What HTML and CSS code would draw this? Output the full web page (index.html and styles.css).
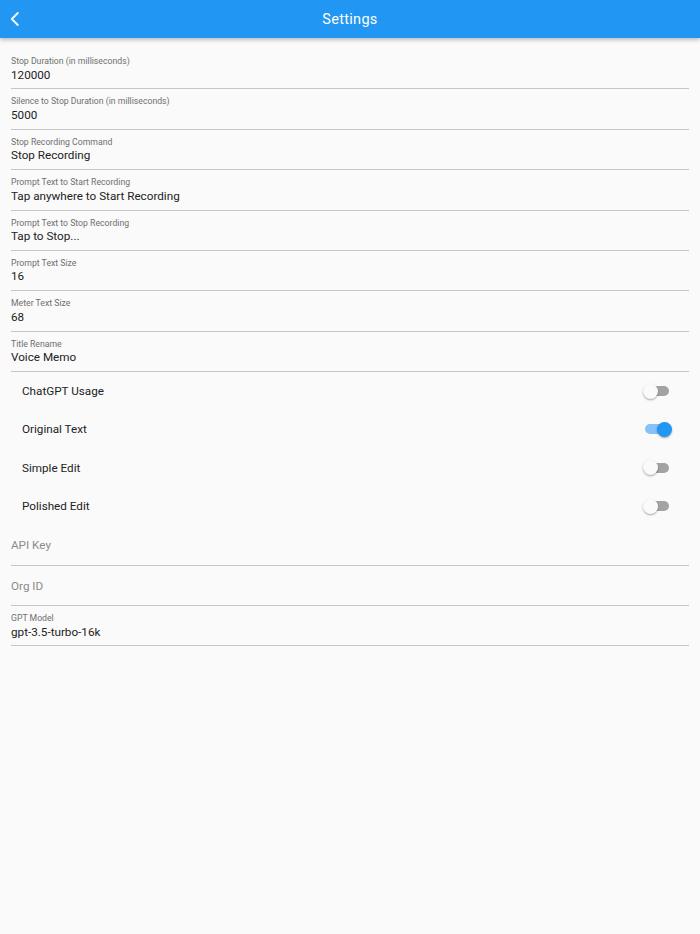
FILE: index.html
```html
<!DOCTYPE html>
<html>
<head>
<meta charset="utf-8">
<link rel="stylesheet" href="styles.css">
</head>
<body>
<header class="appbar">
  <button class="back" aria-label="Back">
    <svg width="14" height="16" viewBox="0 0 14 16"><path d="M9.8 2 L3.8 8 L9.8 14" fill="none" stroke="#fff" stroke-width="1.8" stroke-linecap="round" stroke-linejoin="round"/></svg>
  </button>
  <h1 class="title">Settings</h1>
</header>
<main class="content">
  <div class="field"><div class="label">Stop Duration (in milliseconds)</div><div class="value">120000</div></div>
  <div class="field"><div class="label">Silence to Stop Duration (in milliseconds)</div><div class="value">5000</div></div>
  <div class="field"><div class="label">Stop Recording Command</div><div class="value">Stop Recording</div></div>
  <div class="field"><div class="label">Prompt Text to Start Recording</div><div class="value">Tap anywhere to Start Recording</div></div>
  <div class="field"><div class="label">Prompt Text to Stop Recording</div><div class="value">Tap to Stop...</div></div>
  <div class="field"><div class="label">Prompt Text Size</div><div class="value">16</div></div>
  <div class="field"><div class="label">Meter Text Size</div><div class="value">68</div></div>
  <div class="field"><div class="label">Title Rename</div><div class="value">Voice Memo</div></div>

  <div class="toggle-row"><span class="toggle-label">ChatGPT Usage</span><span class="switch"><span class="track"></span><span class="thumb"></span></span></div>
  <div class="toggle-row"><span class="toggle-label">Original Text</span><span class="switch on"><span class="track"></span><span class="thumb"></span></span></div>
  <div class="toggle-row"><span class="toggle-label">Simple Edit</span><span class="switch"><span class="track"></span><span class="thumb"></span></span></div>
  <div class="toggle-row"><span class="toggle-label">Polished Edit</span><span class="switch"><span class="track"></span><span class="thumb"></span></span></div>

  <div class="field"><div class="placeholder">API Key</div></div>
  <div class="field"><div class="placeholder">Org ID</div></div>
  <div class="field"><div class="label">GPT Model</div><div class="value">gpt-3.5-turbo-16k</div></div>
</main>
</body>
</html>
```
FILE: styles.css
```css
html, body {
  margin: 0;
  padding: 0;
  background: #fafafa;
  font-family: Roboto, "Liberation Sans", sans-serif;
  color: #212121;
}
.appbar {
  position: relative;
  height: 38px;
  background: #2196f3;
  box-shadow: 0 2px 4px rgba(0, 0, 0, 0.25);
  display: flex;
  align-items: center;
  justify-content: center;
  z-index: 1;
}
.back {
  position: absolute;
  left: 8px;
  top: 11px;
  background: none;
  border: 0;
  padding: 0;
  width: 14px;
  height: 16px;
  display: block;
}
.back svg { display: block; }
.title {
  margin: 0;
  font-family: Roboto, "Liberation Sans", sans-serif;
  font-weight: 400;
  font-size: 14.5px;
  color: #fff;
  letter-spacing: 0.3px;
}
.content {
  padding: 11.1px 11px 0 11px;
}
.field {
  height: 40.36px;
  box-sizing: border-box;
  border-bottom: 1px solid #c6c6c6;
  padding-top: 6px;
}
.label {
  font-size: 8.7px;
  line-height: 12px;
  color: #6f6f6f;
}
.value {
  font-size: 11.7px;
  line-height: 16px;
  margin-top: -0.5px;
  color: #222;
}
.placeholder {
  font-size: 11.7px;
  line-height: 16px;
  padding-top: 6px;
  color: #8a8a8a;
}
.toggle-row {
  height: 38.33px;
  display: flex;
  align-items: center;
  justify-content: space-between;
  padding: 0 19px 0 11px;
}
.toggle-label {
  font-size: 11.7px;
  color: #222;
}
.switch {
  position: relative;
  width: 27px;
  height: 16px;
}
.track {
  position: absolute;
  left: 2px;
  right: 1px;
  top: 3px;
  height: 10px;
  border-radius: 5px;
  background: #a3a3a3;
}
.thumb {
  position: absolute;
  left: 0;
  top: 0.5px;
  width: 15px;
  height: 15px;
  border-radius: 50%;
  background: #fafafa;
  box-shadow: 0 1px 2px rgba(0, 0, 0, 0.35);
}
.switch.on .track { background: #85c2f7; }
.switch.on .thumb {
  left: auto;
  right: -1.5px;
  background: #2196f3;
}
```
